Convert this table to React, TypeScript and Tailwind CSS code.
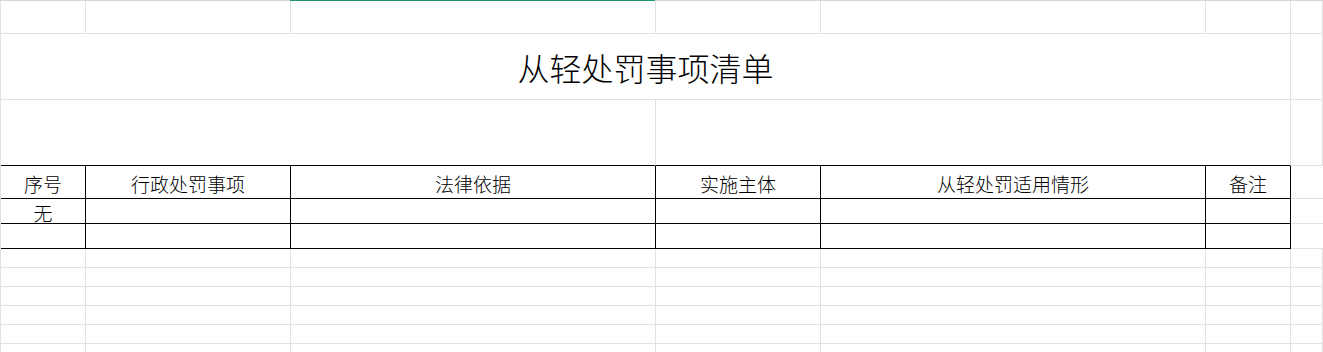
import React from "react";

// column widths of the sheet (A–F are the table, G is the spare column on the right)
const headers = ["序号", "行政处罚事项", "法律依据", "实施主体", "从轻处罚适用情形", "备注"];

const grid = "grid grid-cols-[85px_205px_365px_165px_385px_85px_1fr]";
const gray = "border-r border-b border-[#e1e1e1]";

function BlankRow({ h }: { h: string }) {
  return (
    <>
      {Array.from({ length: 7 }).map((_, i) => (
        <div key={i} className={`${h} ${gray}`} />
      ))}
    </>
  );
}

function TableRow({ cells, h }: { cells: string[]; h: string }) {
  return (
    <>
      {cells.map((c, i) => (
        <div
          key={i}
          className={`${h} flex items-center justify-center border-r border-b border-black text-[19px] font-light leading-none`}
        >
          {c}
        </div>
      ))}
      <div className={`${h} border-b border-[#e1e1e1]`} />
    </>
  );
}

export default function App() {
  return (
    <div
      className="h-[352px] w-[1323px] overflow-hidden bg-white text-black"
      style={{ fontFamily: '"Noto Sans CJK SC", "Noto Sans", sans-serif' }}
    >
      {/* column header strip, with the selected column marked in green */}
      <div className={`${grid} h-px`}>
        <div className="col-span-2 bg-[#d6d6d6]" />
        <div className="bg-[#1a9b6c]" />
        <div className="col-span-4 bg-[#d6d6d6]" />
      </div>

      <div className={`${grid} border-l border-[#e1e1e1]`}>
        <BlankRow h="h-[33px]" />

        {/* title row, merged A:F */}
        <div
          className={`col-span-6 h-[66px] flex items-center justify-center pt-px text-[32px] font-light leading-none ${gray}`}
        >
          从轻处罚事项清单
        </div>
        <div className={`h-[66px] ${gray}`} />

        {/* empty merged cells above the table (A:C and D:F) */}
        <div className="col-span-3 h-[66px] border-r border-[#e1e1e1] border-b border-b-black" />
        <div className="col-span-3 h-[66px] border-r border-[#e1e1e1] border-b border-b-black" />
        <div className={`h-[66px] ${gray}`} />

        <TableRow cells={headers} h="h-[33px] pt-[2px]" />
        <TableRow cells={["无", "", "", "", "", ""]} h="h-[25px] pt-[2px]" />
        <TableRow cells={["", "", "", "", "", ""]} h="h-[25px]" />

        {Array.from({ length: 6 }).map((_, i) => (
          <BlankRow key={i} h="h-[19px]" />
        ))}
      </div>
    </div>
  );
}
